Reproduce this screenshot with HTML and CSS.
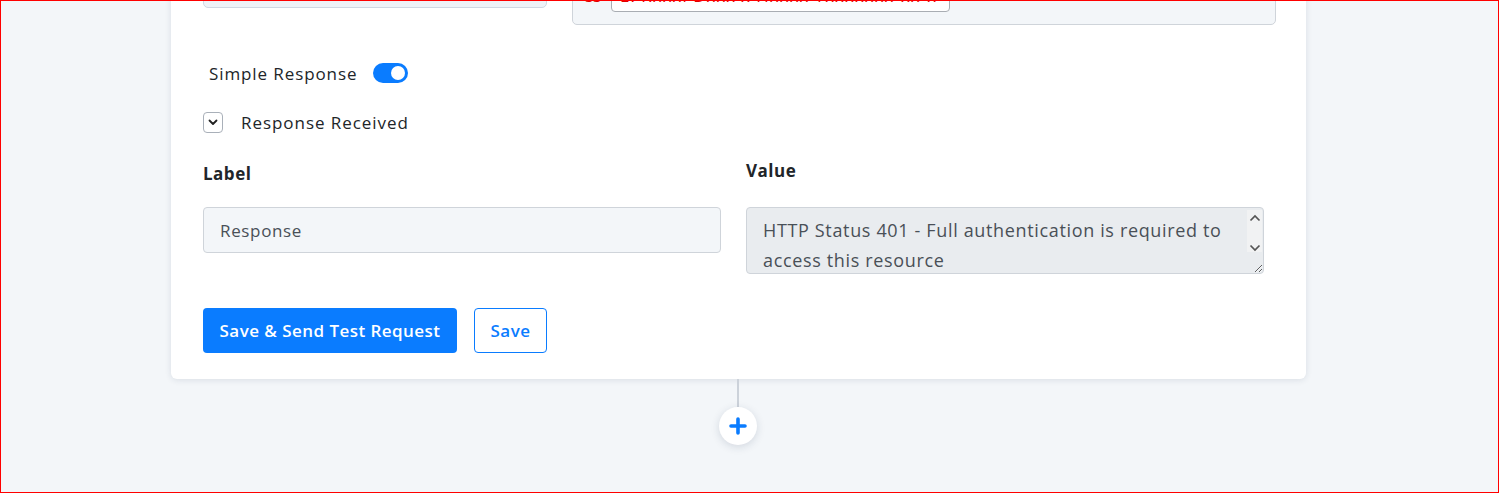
FILE: index.html
```html
<!DOCTYPE html>
<html>
<head>
  <link rel="stylesheet" href="styles.css">
</head>
<body>
  <div class="frame">
    <div class="card">
      <!-- header fields, scrolled partly out of view -->
      <div class="top-row">
        <div class="url-input"></div>
        <div class="header-box">
          <span class="header-key">ss</span>
          <div class="header-field">E. Rxxxl Dxxx'x Hxxxx Txxxxxxx-xx-x</div>
        </div>
      </div>

      <div class="toggle-row">
        <span>Simple Response</span>
        <span class="switch on"><span class="knob"></span></span>
      </div>

      <div class="collapse-row">
        <span class="chev">
          <svg width="10" height="7" viewBox="0 0 10 7"><path d="M1.5 1.5 L5 5 L8.5 1.5" fill="none" stroke="#222" stroke-width="1.8" stroke-linecap="round" stroke-linejoin="round"/></svg>
        </span>
        <span>Response Received</span>
      </div>

      <div class="fields">
        <div class="field">
          <label class="field-label">Label</label>
          <input class="text-input" type="text" value="Response" readonly>
        </div>
        <div class="field">
          <label class="field-label value-label">Value</label>
          <div class="area-wrap">
            <textarea class="text-area" readonly>HTTP Status 401 - Full authentication is required to access this resource</textarea>
            <!-- scroll arrows of the textarea -->
            <span class="scroll-arrows">
              <svg width="12" height="8" viewBox="0 0 12 8"><path d="M1.5 6.5 L6 2 L10.5 6.5" fill="none" stroke="#555" stroke-width="1.7"/></svg>
              <svg width="12" height="8" viewBox="0 0 12 8"><path d="M1.5 1.5 L6 6 L10.5 1.5" fill="none" stroke="#555" stroke-width="1.7"/></svg>
            </span>
          </div>
        </div>
      </div>

      <div class="actions">
        <button class="btn btn-primary" type="button">Save &amp; Send Test Request</button>
        <button class="btn btn-outline" type="button">Save</button>
      </div>
    </div>

    <div class="connector"></div>
    <button class="add-step" type="button">
      <svg width="18" height="18" viewBox="0 0 18 18"><path d="M9 2 V16 M2 9 H16" stroke="#0a7cff" stroke-width="3.6" stroke-linecap="round"/></svg>
    </button>
  </div>
</body>
</html>
```

FILE: styles.css
```css
body {
  margin: 0;
  font-family: "Open Sans", Arial, sans-serif;
  color: #212529;
}
.frame {
  box-sizing: border-box;
  width: 1499px;
  height: 493px;
  border: 1px solid #ff0000;
  background-color: #f3f6f9;
  overflow: hidden;
}
.card {
  width: 1135px;
  margin-top: -41px;
  margin-left: 170px;
  padding: 0 0 26px 32px;
  box-sizing: border-box;
  background-color: #fff;
  border-radius: 0 0 6px 6px;
  box-shadow: 0 1px 6px rgba(30, 50, 80, 0.12);
}
.top-row {
  display: flex;
  align-items: flex-start;
  gap: 25px;
}
.url-input {
  width: 344px;
  height: 48px;
  box-sizing: border-box;
  background-color: #eef2f7;
  border: 1px solid #cfd7e2;
  border-radius: 5px;
}
.header-box {
  width: 704px;
  height: 65px;
  box-sizing: border-box;
  display: flex;
  align-items: flex-start;
  padding: 17px 0 0 12px;
  background-color: #f3f6f9;
  border: 1px solid #cfd4da;
  border-radius: 5px;
}
.header-key {
  color: #e00000;
  font-size: 17px;
  line-height: 28px;
  padding-top: 4px;
  width: 26px;
}
.header-field {
  width: 339px;
  height: 34px;
  box-sizing: border-box;
  padding: 5px 8px 0;
  background-color: #fff;
  border: 1px solid #a9adb3;
  border-radius: 4px;
  color: #e00000;
  font-size: 17px;
  line-height: 24px;
  letter-spacing: 1px;
  white-space: nowrap;
  overflow: hidden;
}
.toggle-row {
  display: flex;
  align-items: center;
  gap: 16px;
  margin-top: 38px;
  padding-left: 6px;
  height: 20px;
  font-size: 17px;
  letter-spacing: 0.9px;
}
.switch {
  width: 35px;
  height: 20px;
  border-radius: 10px;
  background-color: #0a7cff;
  display: flex;
  align-items: center;
  justify-content: flex-end;
  padding: 0 3px;
  box-sizing: border-box;
}
.knob {
  width: 14px;
  height: 14px;
  border-radius: 50%;
  background-color: #fff;
}
.collapse-row {
  display: flex;
  align-items: center;
  gap: 18px;
  margin-top: 29px;
  height: 21px;
  font-size: 17px;
  letter-spacing: 0.95px;
}
.chev {
  width: 20px;
  height: 21px;
  box-sizing: border-box;
  border: 1px solid #a9b0b9;
  border-radius: 4px;
  display: flex;
  align-items: center;
  justify-content: center;
}
.fields {
  display: flex;
  gap: 25px;
  margin-top: 28px;
}
.field {
  width: 518px;
  display: flex;
  flex-direction: column;
}
.field-label {
  font-weight: bold;
  font-size: 17px;
  line-height: 26px;
  letter-spacing: 0.5px;
  margin-bottom: 20px;
}
.value-label {
  margin-top: -3px;
  margin-bottom: 23px;
}
.text-input {
  height: 46px;
  box-sizing: border-box;
  padding: 0 16px;
  font-family: inherit;
  font-size: 17px;
  letter-spacing: 0.65px;
  color: #495057;
  background-color: #f3f6f9;
  border: 1px solid #cfd4da;
  border-radius: 4px;
  outline: none;
}
.area-wrap {
  position: relative;
}
.text-area {
  display: block;
  width: 100%;
  height: 67px;
  box-sizing: border-box;
  padding: 7px 28px 7px 16px;
  font-family: inherit;
  font-size: 18px;
  line-height: 30px;
  letter-spacing: 0.65px;
  color: #495057;
  background-color: #e9ecef;
  border: 1px solid #cfd4da;
  border-radius: 4px;
  overflow: hidden;
  resize: vertical;
  outline: none;
}
.scroll-arrows {
  position: absolute;
  top: 3px;
  right: 2px;
  width: 15px;
  height: 42px;
  padding-top: 4px;
  box-sizing: border-box;
  display: flex;
  flex-direction: column;
  align-items: center;
  justify-content: space-between;
  background-color: #f1f2f3;
}
.actions {
  display: flex;
  gap: 17px;
  margin-top: 34px;
}
.btn {
  height: 45px;
  padding: 0 12px;
  font-family: inherit;
  font-size: 17px;
  font-weight: 600;
  letter-spacing: 0.45px;
  border-radius: 4px;
  cursor: pointer;
}
.btn-primary {
  width: 254px;
  background-color: #0a7cff;
  color: #fff;
  border: none;
}
.btn-outline {
  width: 73px;
  background-color: #fff;
  color: #0a7cff;
  border: 1px solid #0a7cff;
}
.connector {
  width: 2px;
  height: 28px;
  margin-left: 736px;
  background-color: #ccd2da;
}
.add-step {
  width: 38px;
  height: 38px;
  margin-left: 718px;
  padding: 0;
  border: none;
  border-radius: 50%;
  background-color: #fff;
  box-shadow: 0 2px 8px rgba(30, 50, 80, 0.15);
  display: flex;
  align-items: center;
  justify-content: center;
}
```
